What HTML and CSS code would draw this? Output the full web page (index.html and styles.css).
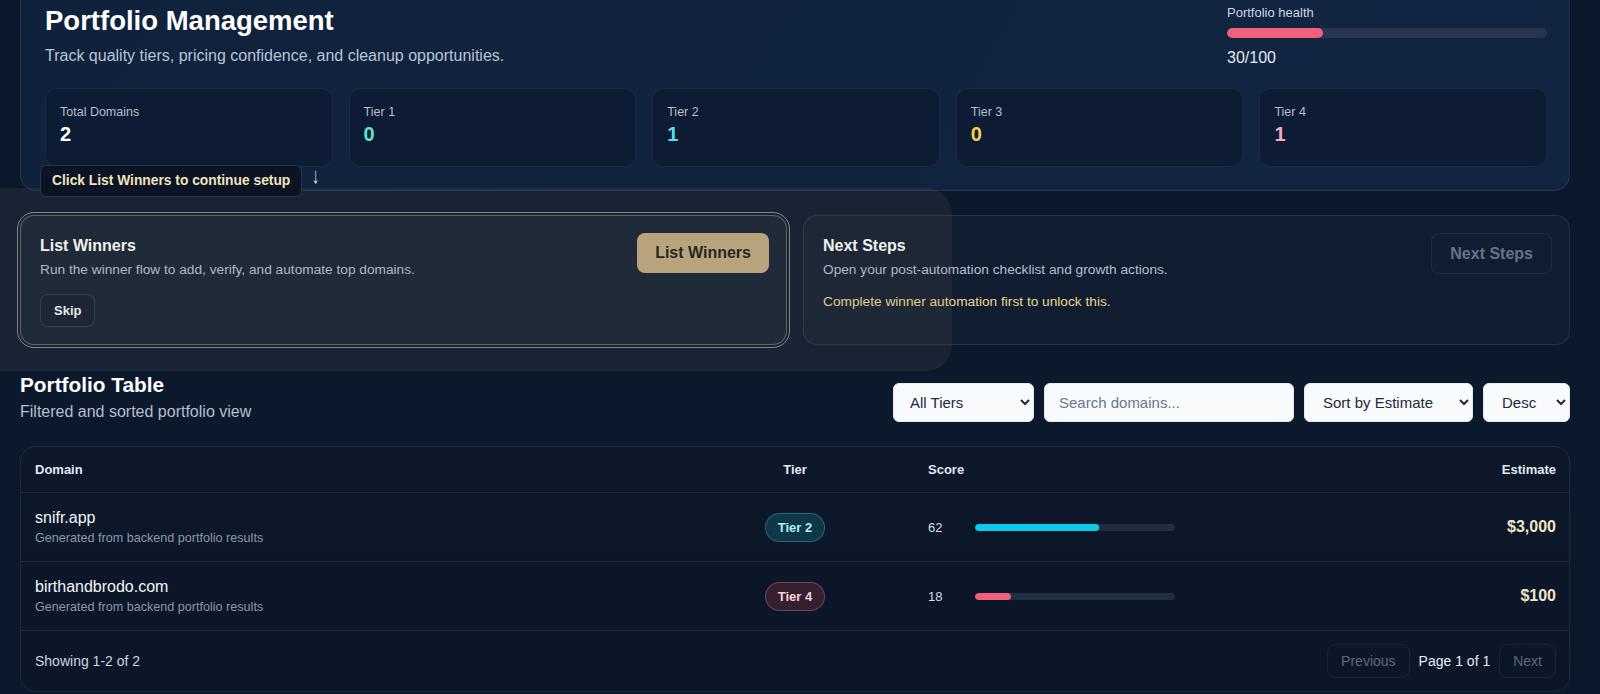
FILE: index.html
```html
<!DOCTYPE html>
<html lang="en">
<head>
<meta charset="utf-8">
<title>Portfolio Management</title>
<link rel="stylesheet" href="styles.css">
</head>
<body>
<div class="page">
  <section class="hero">
    <div class="hero-head">
      <div class="hero-text">
        <h1 class="hero-title">Portfolio Management</h1>
        <p class="hero-sub">Track quality tiers, pricing confidence, and cleanup opportunities.</p>
      </div>
      <div class="health">
        <div class="health-label">Portfolio health</div>
        <div class="health-track"><div class="health-fill" style="width:30%"></div></div>
        <div class="health-value">30/100</div>
      </div>
    </div>
    <div class="stats">
      <div class="stat"><div class="stat-label">Total Domains</div><div class="stat-value v-total">2</div></div>
      <div class="stat"><div class="stat-label">Tier 1</div><div class="stat-value v-t1">0</div></div>
      <div class="stat"><div class="stat-label">Tier 2</div><div class="stat-value v-t2">1</div></div>
      <div class="stat"><div class="stat-label">Tier 3</div><div class="stat-value v-t3">0</div></div>
      <div class="stat"><div class="stat-label">Tier 4</div><div class="stat-value v-t4">1</div></div>
    </div>
  </section>

  <section class="workflow">
    <div class="wf-card wf-active">
      <div class="wf-body">
        <h3 class="wf-title">List Winners</h3>
        <p class="wf-desc">Run the winner flow to add, verify, and automate top domains.</p>
        <button class="btn-ghost">Skip</button>
      </div>
      <button class="btn-primary">List Winners</button>
    </div>
    <div class="wf-card">
      <div class="wf-body">
        <h3 class="wf-title">Next Steps</h3>
        <p class="wf-desc">Open your post-automation checklist and growth actions.</p>
        <p class="wf-warn">Complete winner automation first to unlock this.</p>
      </div>
      <button class="btn-disabled">Next Steps</button>
    </div>
  </section>

  <section class="table-section">
    <div class="table-head">
      <div>
        <h2 class="table-title">Portfolio Table</h2>
        <p class="table-sub">Filtered and sorted portfolio view</p>
      </div>
      <div class="filters">
        <select class="field f-tier"><option>All Tiers</option></select>
        <input class="field f-search" type="text" placeholder="Search domains...">
        <select class="field f-sort"><option>Sort by Estimate</option></select>
        <select class="field f-dir"><option>Desc</option></select>
      </div>
    </div>

    <div class="table-card">
      <div class="row row-head">
        <div>Domain</div>
        <div class="c-tier">Tier</div>
        <div class="c-score">Score</div>
        <div class="c-est">Estimate</div>
      </div>
      <div class="row">
        <div>
          <div class="domain">snifr.app</div>
          <div class="domain-sub">Generated from backend portfolio results</div>
        </div>
        <div class="c-tier"><span class="badge badge-t2">Tier 2</span></div>
        <div class="c-score">
          <span class="score-num">62</span>
          <div class="score-track"><div class="score-fill fill-cyan" style="width:62%"></div></div>
        </div>
        <div class="c-est est">$3,000</div>
      </div>
      <div class="row">
        <div>
          <div class="domain">birthandbrodo.com</div>
          <div class="domain-sub">Generated from backend portfolio results</div>
        </div>
        <div class="c-tier"><span class="badge badge-t4">Tier 4</span></div>
        <div class="c-score">
          <span class="score-num">18</span>
          <div class="score-track"><div class="score-fill fill-pink" style="width:18%"></div></div>
        </div>
        <div class="c-est est">$100</div>
      </div>
      <div class="table-foot">
        <span class="showing">Showing 1-2 of 2</span>
        <div class="pager">
          <button class="pg-btn">Previous</button>
          <span class="pg-label">Page 1 of 1</span>
          <button class="pg-btn">Next</button>
        </div>
      </div>
    </div>
  </section>

  <div class="spotlight"></div>
  <div class="tour-tip">
    <div class="tip-box">Click List Winners to continue setup</div>
    <span class="tip-arrow">↓</span>
  </div>
</div>
</body>
</html>
```

FILE: styles.css
```css
* { box-sizing: border-box; }

html, body {
  margin: 0;
  padding: 0;
}

body {
  background: linear-gradient(180deg, #0b172b 0%, #0c192d 60%, #0b172a 100%);
  font-family: "Liberation Sans", Arial, sans-serif;
  color: #e6ecf4;
  height: 694px;
  overflow: hidden;
}

.page {
  position: relative;
  padding: 0 30px 0 20px;
  margin-top: -20px;
}

h1, h2, h3, p { margin: 0; }

button, input, select { font-family: inherit; }

/* Hero */
.hero {
  background: linear-gradient(120deg, #10213c 0%, #11243f 55%, #112543 100%);
  border: 1px solid rgba(255, 255, 255, 0.08);
  border-radius: 16px;
  padding: 24px 22px 23px 24px;
}

.hero-head {
  display: flex;
  justify-content: space-between;
  align-items: flex-start;
}

.hero-title {
  font-size: 27.5px;
  line-height: 32px;
  font-weight: 700;
  color: #ffffff;
}

.hero-sub {
  margin-top: 8px;
  font-size: 16px;
  line-height: 22px;
  color: #b9c4d4;
}

.health {
  width: 320px;
}

.health-label {
  font-size: 13px;
  line-height: 16px;
  color: #cdd6e2;
}

.health-track {
  margin-top: 7px;
  height: 10px;
  border-radius: 5px;
  background: #263650;
  overflow: hidden;
}

.health-fill {
  height: 100%;
  border-radius: 5px;
  background: #f26079;
}

.health-value {
  margin-top: 10px;
  font-size: 16px;
  line-height: 20px;
  color: #e3e9f1;
}

.stats {
  margin-top: 20px;
  display: grid;
  grid-template-columns: repeat(5, 1fr);
  gap: 16px;
}

.stat {
  background: #0d1c34;
  border: 1px solid rgba(255, 255, 255, 0.06);
  border-radius: 12px;
  padding: 15px 14px 18px;
  height: 79px;
}

.stat-label {
  font-size: 12.5px;
  line-height: 16px;
  color: #b4bfcf;
}

.stat-value {
  margin-top: 1px;
  font-size: 20px;
  line-height: 26px;
  font-weight: 700;
}

.v-total { color: #ffffff; }
.v-t1 { color: #5fe3c0; }
.v-t2 { color: #5fdcf2; }
.v-t3 { color: #f7d14a; }
.v-t4 { color: #f6a8bb; }

/* Workflow cards */
.workflow {
  margin-top: 24px;
  display: grid;
  grid-template-columns: 1fr 1fr;
  gap: 16px;
}

.wf-card {
  display: flex;
  justify-content: space-between;
  align-items: flex-start;
  border: 1px solid rgba(255, 255, 255, 0.09);
  border-radius: 14px;
  background: rgba(255, 255, 255, 0.025);
  padding: 20px 17px 17px 19px;
  min-height: 130px;
}

.wf-active {
  border-color: rgba(220, 220, 215, 0.35);
  outline: 1px solid rgba(230, 226, 212, 0.55);
  outline-offset: 2px;
  background: rgba(255, 255, 255, 0.035);
}

.wf-title {
  font-size: 16px;
  line-height: 20px;
  font-weight: 700;
  color: #ffffff;
}

.wf-desc {
  margin-top: 4px;
  font-size: 13.7px;
  line-height: 20px;
  color: #b3bfcf;
}

.wf-warn {
  margin-top: 13px;
  font-size: 13.7px;
  line-height: 18px;
  color: #ecd58c;
}

.btn-ghost {
  margin-top: 14px;
  height: 33px;
  padding: 0 13px;
  font-size: 13px;
  font-weight: 700;
  color: #f2f5f9;
  background: rgba(10, 20, 36, 0.35);
  border: 1px solid rgba(255, 255, 255, 0.13);
  border-radius: 8px;
}

.btn-primary {
  margin-top: -3px;
  height: 40px;
  padding: 0 18px;
  font-size: 16px;
  font-weight: 700;
  color: #1b1a17;
  background: #bda97f;
  border: none;
  border-radius: 8px;
}

.btn-disabled {
  margin-top: -3px;
  height: 41px;
  padding: 0 18px;
  font-size: 16px;
  font-weight: 700;
  color: #66738a;
  background: transparent;
  border: 1px solid rgba(255, 255, 255, 0.07);
  border-radius: 8px;
}

/* Table section */
.table-section {
  margin-top: 28px;
}

.table-head {
  display: flex;
  justify-content: space-between;
  align-items: flex-end;
}

.table-title {
  font-size: 20.8px;
  line-height: 24px;
  font-weight: 700;
  color: #ffffff;
}

.table-sub {
  margin-top: 5px;
  font-size: 16px;
  line-height: 20px;
  color: #b3bfcf;
}

.filters {
  display: flex;
  gap: 10px;
}

.field {
  height: 39px;
  background: #f8fafc;
  border: 1px solid #e2e8f0;
  border-radius: 6px;
  font-size: 15px;
  color: #1e293b;
  padding: 0 10px 0 12px;
}

.f-tier { width: 141px; }
.f-search { width: 250px; padding-left: 14px; }
.f-search::placeholder { color: #6b7789; }
.f-sort { width: 169px; padding-left: 14px; }
.f-dir { width: 87px; padding-left: 14px; }

.table-card {
  margin-top: 24px;
  border: 1px solid rgba(255, 255, 255, 0.08);
  border-radius: 16px;
  background: rgba(12, 22, 40, 0.5);
  overflow: hidden;
}

.row {
  display: grid;
  grid-template-columns: 690px 140px 363px 1fr;
  align-items: center;
  padding: 0 13px 0 14px;
  height: 69px;
  border-bottom: 1px solid rgba(255, 255, 255, 0.07);
}

.row-head {
  height: 46px;
  font-size: 13px;
  font-weight: 700;
  color: #e3e8f0;
}

.c-tier { text-align: center; }

.c-score {
  padding-left: 63px;
  display: flex;
  align-items: center;
}

.c-est { text-align: right; }

.domain {
  font-size: 16px;
  line-height: 20px;
  color: #f3f6fa;
}

.domain-sub {
  margin-top: 2px;
  font-size: 12.6px;
  line-height: 16px;
  color: #8b97a9;
}

.badge {
  display: inline-block;
  height: 29px;
  line-height: 27px;
  padding: 0 12px;
  border-radius: 15px;
  font-size: 13px;
  font-weight: 700;
}

.badge-t2 {
  background: #0f3748;
  border: 1px solid rgba(64, 200, 230, 0.35);
  color: #a9eefa;
}

.badge-t4 {
  background: #35202f;
  border: 1px solid rgba(240, 130, 160, 0.35);
  color: #fbd0da;
}

.score-num {
  width: 47px;
  font-size: 13px;
  color: #d6dde7;
}

.score-track {
  width: 200px;
  height: 7px;
  border-radius: 4px;
  background: #212e42;
  overflow: hidden;
}

.score-fill {
  height: 100%;
  border-radius: 4px;
}

.fill-cyan { background: #0ccbe9; }
.fill-pink { background: #f0607a; }

.est {
  font-size: 16px;
  font-weight: 700;
  color: #f1e4c4;
}

.table-foot {
  display: flex;
  justify-content: space-between;
  align-items: center;
  padding: 13px 13px 13px 14px;
}

.showing {
  font-size: 14px;
  color: #cdd5e0;
}

.pager {
  display: flex;
  align-items: center;
  gap: 9px;
}

.pg-btn {
  height: 34px;
  padding: 0 13px;
  font-size: 14px;
  color: #5d697c;
  background: transparent;
  border: 1px solid rgba(255, 255, 255, 0.06);
  border-radius: 8px;
}

.pg-label {
  font-size: 14px;
  color: #e8edf4;
}

/* Tour overlay */
.spotlight {
  position: absolute;
  left: -30px;
  top: 208px;
  width: 982px;
  height: 183px;
  border-radius: 26px;
  background: rgba(140, 130, 105, 0.11);
  pointer-events: none;
}

.tour-tip {
  position: absolute;
  left: 40px;
  top: 185px;
  display: flex;
  align-items: center;
  gap: 8px;
}

.tip-box {
  height: 32px;
  line-height: 30px;
  padding: 0 11px;
  background: #0a1424;
  border: 1px solid rgba(255, 255, 255, 0.14);
  border-radius: 6px;
  font-size: 13.8px;
  font-weight: 700;
  color: #f2e2bd;
}

.tip-arrow {
  font-size: 22px;
  line-height: 22px;
  color: #d5dce6;
  margin-top: -10px;
  transform: scaleX(0.7);
}
```
